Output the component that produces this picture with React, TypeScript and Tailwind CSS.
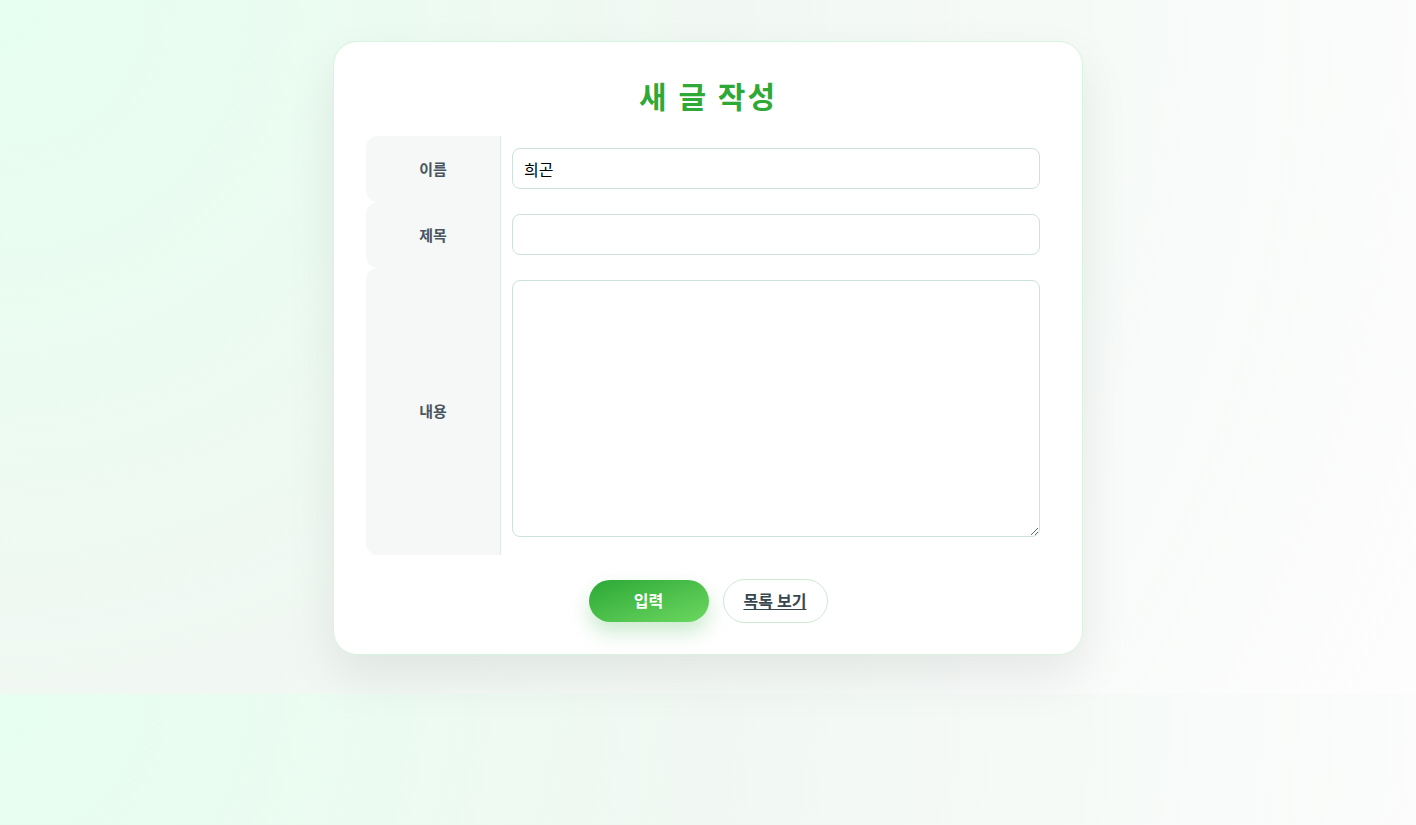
const fields = [
  { label: "이름", value: "희곤" },
  { label: "제목", value: "" },
];

export default function App() {
  return (
    <div className="min-h-screen bg-[radial-gradient(circle_at_top_left,#e6fff0_0%,#f1f8f3_45%,#fdfdfd_100%)] [background-size:100%_694px] bg-repeat font-['Noto_Sans','Noto_Sans_CJK_KR',sans-serif] pt-[41px] pb-10">
      <div className="mx-auto w-[750px] rounded-3xl border border-[#d6f5dd] bg-white px-8 pt-8 pb-[31px] shadow-[0_22px_50px_rgba(0,0,0,0.08)]">
        <h1 className="mb-[17px] text-center text-[30px] leading-[45px] font-bold tracking-[2px] text-[#2ea836]">
          새 글 작성
        </h1>

        <div className="grid grid-cols-[135px_1fr]">
          {fields.map((f) => (
            <div key={f.label} className="contents">
              <div className="flex h-[66px] items-center justify-center rounded-l-xl border-r border-[#e1ece9] bg-[#f5f8f7] text-[15px] font-bold text-[#4a5561]">
                {f.label}
              </div>
              <div className="pt-3 pr-[10px] pl-[11px]">
                <input
                  type="text"
                  defaultValue={f.value}
                  className="block h-[41px] w-full rounded-lg border border-[#cfe1dc] bg-white px-[11px] text-base text-black outline-none"
                />
              </div>
            </div>
          ))}
          <div className="flex h-[287px] items-center justify-center rounded-l-xl border-r border-[#e1ece9] bg-[#f5f8f7] text-[15px] font-bold text-[#4a5561]">
            내용
          </div>
          <div className="pt-3 pr-[10px] pl-[11px]">
            <textarea className="block h-[257px] w-full rounded-lg border border-[#cfe1dc] bg-white px-[11px] py-2 text-base text-black outline-none" />
          </div>
        </div>

        <div className="mt-6 flex items-center justify-center gap-[14px]">
          <button className="h-[42px] w-[120px] rounded-full bg-gradient-to-br from-[#2aa836] to-[#6ad860] text-base font-bold text-white shadow-[0_10px_20px_rgba(46,170,58,0.25)]">
            입력
          </button>
          <a className="flex h-[44px] w-[105px] items-center justify-center rounded-full border border-[#cfe8d6] bg-white text-base font-bold text-[#37474f] underline underline-offset-2">
            목록 보기
          </a>
        </div>
      </div>
    </div>
  );
}
